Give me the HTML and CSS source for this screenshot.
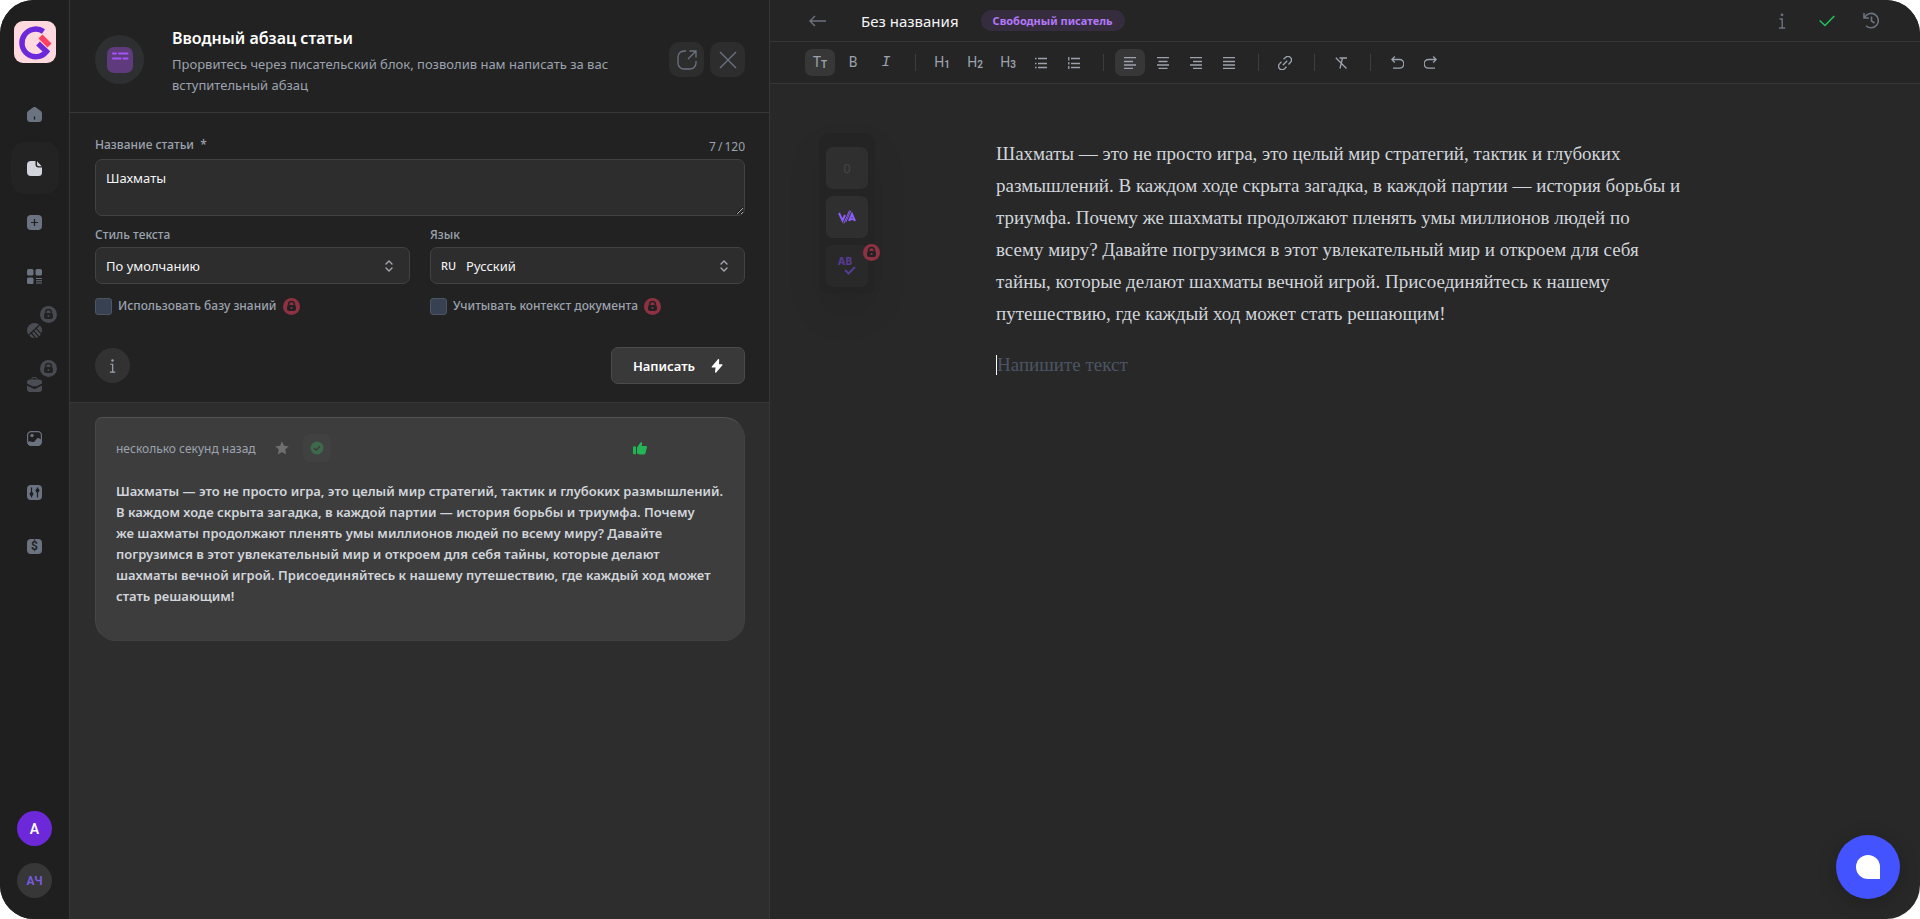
FILE: index.html
```html
<!DOCTYPE html>
<html lang="ru">
<head>
<meta charset="utf-8">
<meta name="viewport" content="width=device-width, initial-scale=1">
<title>Без названия</title>
<link rel="stylesheet" href="styles.css">
</head>
<body>
<svg class="defs" width="0" height="0" aria-hidden="true">
  <symbol id="lock" viewBox="0 0 17 17">
    <path d="M5.6 7.4V6.4a2.9 2.9 0 0 1 5.8 0v1" fill="none" stroke="#222" stroke-width="1.5"/>
    <rect x="4" y="7" width="9" height="6" rx="2" fill="#222"/>
    <circle class="lock-hole" cx="8.5" cy="9.9" r="1"/>
  </symbol>
  <symbol id="updown" viewBox="0 0 8 12">
    <path d="M1 4l3-3 3 3M1 8l3 3 3-3" fill="none" stroke="#a3a7b0" stroke-width="1.4" stroke-linecap="round" stroke-linejoin="round"/>
  </symbol>
  <symbol id="info" viewBox="0 0 8 16">
    <path d="M1.5 6H4.2V15M1 15H7.2" fill="none" stroke="currentColor" stroke-width="1.4"/>
    <circle cx="4" cy="1.8" r="1.4" fill="currentColor"/>
  </symbol>
</svg>

<div class="app">
  <aside class="rail">
    <a class="logo" href="#" aria-label="Главная">
      <svg viewBox="0 0 42 42" width="42" height="42">
        <rect width="42" height="42" rx="9" fill="#ffd9de"/>
        <path d="M29.500 10.500A13.800 13.800 0 1 0 32.500 30.500L24 22.500" fill="none" stroke="#6d28d9" stroke-width="5.400"/>
        <path d="M26.500 15.500l9 9" stroke="#fb3f5e" stroke-width="5.600"/>
      </svg>
    </a>
    <nav class="rail-nav">
      <a href="#" aria-label="Дом">
        <svg viewBox="0 0 15 15" width="15" height="15"><path fill="currentColor" d="M6 .5a2.400 2.400 0 0 1 3 0l4.800 3.600A3 3 0 0 1 15 6.500V11.500A3.500 3.500 0 0 1 11.500 15h-8A3.500 3.500 0 0 1 0 11.500V6.500A3 3 0 0 1 1.200 4.100z"/><path d="M7.500 9.500v3" stroke="#1f1f1f" stroke-width="1.300"/></svg>
      </a>
      <a class="active" href="#" aria-label="Документы">
        <svg viewBox="0 0 15 15" width="15" height="15"><path fill="currentColor" d="M4 0h4.500v3.500A3 3 0 0 0 11.500 6.500H15V11.500A3.500 3.500 0 0 1 11.500 15H4A4 4 0 0 1 0 11V4A4 4 0 0 1 4 0zM10 .3L14.700 5.200H11.800A1.800 1.800 0 0 1 10 3.400z"/></svg>
      </a>
      <a href="#" aria-label="Создать">
        <svg viewBox="0 0 15 15" width="15" height="15"><rect width="15" height="15" rx="4" fill="currentColor"/><path d="M7.500 4v7M4 7.500h7" stroke="#1f1f1f" stroke-width="1.200"/></svg>
      </a>
      <a href="#" aria-label="Шаблоны">
        <svg viewBox="0 0 15 15" width="15" height="15" fill="currentColor"><rect width="6.500" height="6.500" rx="1.500"/><rect x="8.500" width="6.500" height="6.500" rx="1.500"/><rect y="8.500" width="6.500" height="6.500" rx="1.500"/><path d="M9 9h6v1H9zM9 11.300h6v1H9zM9 13.600h6v1H9z"/></svg>
      </a>
      <a class="locked" href="#" aria-label="Игры">
        <svg viewBox="0 0 15 15" width="15" height="15"><circle cx="7.500" cy="7.500" r="7.500" fill="currentColor"/><path d="M1.500 12.500L12.500 2M3.500 9l5 6M6 6.800l6 7M8.500 4.600l6.500 7" stroke="#1f1f1f" stroke-width="1.200"/></svg>
        <span class="badge grey"><svg width="17" height="17"><use href="#lock"/></svg></span>
      </a>
      <a class="locked" href="#" aria-label="Работа">
        <svg viewBox="0 0 15 15" width="15" height="15"><path d="M5 3V1.500A1 1 0 0 1 6 .6h3a1 1 0 0 1 1 .9V3" fill="none" stroke="currentColor"/><path fill="currentColor" d="M3 2.500h9a3 3 0 0 1 3 4L9 9.500a3 3 0 0 0-3 0L0 6.500a3 3 0 0 1 3-4zM0 8.500l6 3a3 3 0 0 0 3 0l6-3V12a3 3 0 0 1-3 3H3a3 3 0 0 1-3-3z"/></svg>
        <span class="badge grey"><svg width="17" height="17"><use href="#lock"/></svg></span>
      </a>
      <a href="#" aria-label="Изображения">
        <svg viewBox="0 0 15 15" width="15" height="15"><rect x=".6" y=".6" width="13.800" height="13.800" rx="3.600" fill="none" stroke="currentColor" stroke-width="1.200"/><circle cx="5" cy="4.500" r="1.700" fill="currentColor"/><path fill="currentColor" d="M.6 11.500C3 8.500 4.500 11.500 6.500 11S9.500 7 11 7s2.400 1 3.400 2v2.500a3 3 0 0 1-3 3h-8a3 3 0 0 1-2.800-3z"/></svg>
      </a>
      <a href="#" aria-label="Настройки">
        <svg viewBox="0 0 15 15" width="15" height="15"><rect width="15" height="15" rx="4" fill="currentColor"/><path d="M4.500 2.500v10M10.500 2.500v10" stroke="#1f1f1f" stroke-width="1.200"/><circle cx="4.500" cy="9" r="1.900" fill="#1f1f1f"/><circle cx="10.500" cy="5.500" r="1.900" fill="#1f1f1f"/></svg>
      </a>
      <a href="#" aria-label="Тарифы"><span class="coin">$</span></a>
    </nav>
    <div class="avatars">
      <button class="avatar violet" type="button">A</button>
      <button class="avatar" type="button">АЧ</button>
    </div>
  </aside>

  <section class="panel">
    <header class="panel-head">
      <span class="tool-icon">
        <svg viewBox="0 0 26 26" width="26" height="26"><rect width="26" height="26" rx="7" fill="#5f3b7d"/><path d="M6 6.500h3M12 6.500h8.500M6 11.500h7.500M16.500 11.500h4" stroke="#a855f7" stroke-width="2" stroke-linecap="round"/></svg>
      </span>
      <div class="panel-title">
        <h1>Вводный абзац статьи</h1>
        <p>Прорвитесь через писательский блок, позволив нам написать за вас вступительный абзац</p>
      </div>
      <div class="head-actions">
        <button type="button" aria-label="Открыть">
          <svg viewBox="0 0 20 20" width="20" height="20"><path d="M9 1H7a6 6 0 0 0-6 6v6a6 6 0 0 0 6 6h6a6 6 0 0 0 6-6v-2M11 9l8-8M12.500 1H19v6.500" fill="none" stroke="currentColor" stroke-width="1.300"/></svg>
        </button>
        <button type="button" aria-label="Закрыть">
          <svg viewBox="0 0 20 20" width="20" height="20"><path d="M2 2l16 16M18 2L2 18" fill="none" stroke="currentColor" stroke-width="1.300"/></svg>
        </button>
      </div>
    </header>

    <form class="form">
      <div class="field">
        <div class="label-row">
          <label for="title">Название статьи &nbsp;*</label>
          <span class="counter">7&thinsp;/&thinsp;120</span>
        </div>
        <textarea id="title" rows="2">Шахматы</textarea>
      </div>
      <div class="columns">
        <div class="field">
          <label for="style">Стиль текста</label>
          <div class="select">
            <select id="style"><option>По умолчанию</option></select>
            <svg width="8" height="12"><use href="#updown"/></svg>
          </div>
          <div class="check">
            <input type="checkbox" id="kb"><label for="kb">Использовать базу знаний</label>
            <span class="badge red"><svg width="17" height="17"><use href="#lock"/></svg></span>
          </div>
        </div>
        <div class="field">
          <label for="lang">Язык</label>
          <div class="select">
            <span class="code">RU</span>
            <select id="lang"><option>Русский</option></select>
            <svg width="8" height="12"><use href="#updown"/></svg>
          </div>
          <div class="check">
            <input type="checkbox" id="ctx"><label for="ctx">Учитывать контекст документа</label>
            <span class="badge red"><svg width="17" height="17"><use href="#lock"/></svg></span>
          </div>
        </div>
      </div>
      <div class="form-foot">
        <button class="info" type="button" aria-label="Справка"><svg width="7" height="14"><use href="#info"/></svg></button>
        <button class="write" type="button">Написать
          <svg viewBox="0 0 12 14" width="12" height="14"><path fill="#fff" d="M7 .3L.8 7.600c-.4.500-.1 1 .5 1h3.200L4 13c0 .8.700 1 1.200.5L11.400 6.300c.4-.5.100-1-.5-1H8L8.200.8C8.200.1 7.500-.2 7 .3z"/></svg>
        </button>
      </div>
    </form>

    <div class="results">
      <article class="card">
        <div class="card-meta">
          <time>несколько секунд назад</time>
          <button class="star" type="button" aria-label="В избранное">
            <svg viewBox="0 0 14 14" width="14" height="14"><path fill="#6f6f6f" d="M7 .3l2 4.500 4.800.5-3.600 3.300 1 4.900L7 11l-4.200 2.500 1-4.900L.2 5.300 5 4.800z"/></svg>
          </button>
          <button class="done" type="button" aria-label="Готово">
            <svg viewBox="0 0 14 14" width="14" height="14"><circle cx="7" cy="7" r="6.500" fill="#3c6a4a"/><path d="M4 7l2.200 2.200L10 5.200" fill="none" stroke="#3d3d3d" stroke-width="1.500"/></svg>
          </button>
          <button class="like" type="button" aria-label="Нравится">
            <svg viewBox="0 0 14 13" width="14" height="13"><path fill="#22b455" d="M0 4.500h3V12.200H1a1 1 0 0 1-1-1zM4 5.500L7 1c.5-1 2.300-.8 2.200.5L8.800 4H13a1 1 0 0 1 1 1.200L12.500 11a2 2 0 0 1-2 1.500H6.500L4 11.500z"/></svg>
          </button>
        </div>
        <p>Шахматы — это не просто игра, это целый мир стратегий, тактик и глубоких размышлений.<br>
          В каждом ходе скрыта загадка, в каждой партии — история борьбы и триумфа. Почему<br>
          же шахматы продолжают пленять умы миллионов людей по всему миру? Давайте<br>
          погрузимся в этот увлекательный мир и откроем для себя тайны, которые делают<br>
          шахматы вечной игрой. Присоединяйтесь к нашему путешествию, где каждый ход может<br>
          стать решающим!</p>
      </article>
    </div>
  </section>

  <main class="editor">
    <header class="doc-bar">
      <button class="back" type="button" aria-label="Назад">
        <svg viewBox="0 0 17 12" width="17" height="12"><path d="M17 6H1M6 1L1 6l5 5" fill="none" stroke="currentColor" stroke-width="1.400"/></svg>
      </button>
      <h2>Без названия</h2>
      <span class="pill">Свободный писатель</span>
      <div class="doc-actions">
        <button type="button" aria-label="Сведения"><svg width="8" height="16"><use href="#info"/></svg></button>
        <button class="saved" type="button" aria-label="Сохранено">
          <svg viewBox="0 0 16 12" width="16" height="12"><path d="M.7 5.500L6 10.500 15.300 1" fill="none" stroke="currentColor" stroke-width="1.500"/></svg>
        </button>
        <button type="button" aria-label="История">
          <svg viewBox="0 0 17 17" width="17" height="17" fill="none" stroke="currentColor" stroke-width="1.600"><path d="M1 1v5h5M1.600 5.500A7.200 7.200 0 1 1 3 13.700"/><path d="M8.500 4.500V9l3 2"/></svg>
        </button>
      </div>
    </header>

    <div class="toolbar" role="toolbar">
      <div class="group">
        <button class="on" type="button">T<small>T</small></button>
        <button type="button">B</button>
        <button class="italic" type="button">I</button>
      </div>
      <div class="group">
        <button type="button">H<small>1</small></button>
        <button type="button">H<small>2</small></button>
        <button type="button">H<small>3</small></button>
        <button type="button" aria-label="Маркированный список"><svg viewBox="0 0 12 12" width="12" height="12"><path d="M3 1.500h9M3 6.500h9M3 10.500h9M0 1.500h1.500M0 6.500h1.500M0 10.500h1.500"/></svg></button>
        <button type="button" aria-label="Нумерованный список"><svg viewBox="0 0 12 12" width="12" height="12"><path d="M3 1.500h9M3 6.500h9M3 10.500h9M.8 0v3.500M.8 5v2.500M.8 9v3"/></svg></button>
      </div>
      <div class="group">
        <button class="on" type="button" aria-label="По левому краю"><svg viewBox="0 0 12 12" width="12" height="12"><path d="M0 .5h12M0 4.500h9M0 8h12M0 11.500h9"/></svg></button>
        <button type="button" aria-label="По центру"><svg viewBox="0 0 12 12" width="12" height="12"><path d="M0 .5h12M1.500 4.500h9M0 8h12M1.500 11.500h9"/></svg></button>
        <button type="button" aria-label="По правому краю"><svg viewBox="0 0 12 12" width="12" height="12"><path d="M0 .5h12M3 4.500h9M0 8h12M3 11.500h9"/></svg></button>
        <button type="button" aria-label="По ширине"><svg viewBox="0 0 12 12" width="12" height="12"><path d="M0 .5h12M0 4.500h12M0 8h12M0 11.500h12"/></svg></button>
      </div>
      <div class="group">
        <button type="button" aria-label="Ссылка"><svg viewBox="0 0 14 14" width="14" height="14"><path d="M5.500 3.200L7.500 1.500a3.200 3.200 0 0 1 5 4.800L10.500 8.500M8.500 10.800l-2 1.900a3.200 3.200 0 0 1-5-4.800l2-2.100M4.800 9.200l4.400-4.400"/></svg></button>
      </div>
      <div class="group">
        <button type="button" aria-label="Очистить формат"><svg viewBox="0 0 12 12" width="12" height="12"><path d="M4.500 1H12M7.500 1L5 11.500M.8.800l10.700 10.700"/></svg></button>
      </div>
      <div class="group">
        <button type="button" aria-label="Отменить"><svg viewBox="0 0 13 13" width="13" height="13"><path d="M1 3.500h7.500a4.200 4.200 0 0 1 0 8.700H2M3.800.5L.8 3.500l3 3"/></svg></button>
        <button type="button" aria-label="Повторить"><svg viewBox="0 0 13 13" width="13" height="13"><path d="M12 3.500H4.500a4.200 4.200 0 0 0 0 8.700H11M9.200.5l3 3-3 3"/></svg></button>
      </div>
    </div>

    <div class="canvas">
      <div class="side-tools">
        <span class="tile count">0</span>
        <button class="tile" type="button" aria-label="Проверка уникальности">
          <svg viewBox="0 0 18 14" width="18" height="14" fill="none" stroke="#8b5cf6"><path d="M1 3l3.500 7.500L7 5M11 11l3-7 3 7M12.500 9.300h4" stroke-width="2"/><path d="M5.800 13.500L11.500 .5M7.800 12L12.800 .8" stroke-width="1"/></svg>
        </button>
        <button class="tile dim" type="button" aria-label="Проверка орфографии">
          <span class="ab">AB</span>
          <svg viewBox="0 0 12 9" width="12" height="9"><path d="M1 4l3.500 3.500L11 1" fill="none" stroke="currentColor" stroke-width="2"/></svg>
          <span class="badge red"><svg width="17" height="17"><use href="#lock"/></svg></span>
        </button>
      </div>
      <div class="document">
        <p>Шахматы — это не просто игра, это целый мир стратегий, тактик и глубоких<br>
          размышлений. В каждом ходе скрыта загадка, в каждой партии — история борьбы и<br>
          триумфа. Почему же шахматы продолжают пленять умы миллионов людей по<br>
          всему миру? Давайте погрузимся в этот увлекательный мир и откроем для себя<br>
          тайны, которые делают шахматы вечной игрой. Присоединяйтесь к нашему<br>
          путешествию, где каждый ход может стать решающим!</p>
        <p class="empty"><span class="caret"></span>Напишите текст</p>
      </div>
    </div>

    <button class="chat" type="button" aria-label="Чат"><span></span></button>
  </main>
</div>
</body>
</html>
```
FILE: styles.css
```css
* { box-sizing: border-box; }

body {
  margin: 0;
  background: #fff;
  color: #f3f4f6;
  font-family: "Noto Sans", "Open Sans", sans-serif;
  font-size: 13px;
}

h1, h2, p { margin: 0; }

button {
  margin: 0;
  padding: 0;
  border: 0;
  background: none;
  color: inherit;
  font: inherit;
  cursor: pointer;
}

svg { display: block; }
.defs { position: absolute; }

.app {
  display: grid;
  grid-template-columns: 70px minmax(0, 700px) minmax(0, 1fr);
  min-height: 100vh;
  border-radius: 34px;
  background: #282828;
  overflow: hidden;
}

/* Left rail */
.rail {
  display: flex;
  flex-direction: column;
  align-items: center;
  padding: 21px 0;
  border-right: 1px solid #373737;
  background: #1f1f1f;
}

.rail-nav {
  display: flex;
  flex-direction: column;
  gap: 2px;
  margin-top: 25px;
}

.rail-nav a {
  position: relative;
  display: grid;
  place-items: center;
  width: 48px;
  height: 52px;
  border-radius: 14px;
  color: #6b7280;
  text-decoration: none;
}

.rail-nav .active { background: #232323; color: #d1d5db; }
.rail-nav .locked { color: #4b4d55; }

.badge {
  display: block;
  flex: none;
  width: 17px;
  height: 17px;
  border-radius: 50%;
}
.badge.grey { background: #484a51; fill: #484a51; }
.badge.red { background: #8f3142; fill: #8f3142; }
.rail-nav .badge { position: absolute; top: 2px; right: 2px; }

.coin {
  width: 15px;
  height: 15px;
  border-radius: 4px;
  background: #6b7280;
  color: #1f1f1f;
  font: 600 12px/15px Roboto, sans-serif;
  text-align: center;
}

.avatars {
  display: flex;
  flex-direction: column;
  gap: 17px;
  margin-top: auto;
}

.avatar {
  width: 35px;
  height: 35px;
  border-radius: 50%;
  background: #373737;
  color: #7c5ce6;
  font-family: Roboto, sans-serif;
  font-size: 12px;
  font-weight: 600;
}
.avatar.violet { background: #6d28d9; color: #fff; font-size: 14px; }

/* Generator panel */
.panel {
  display: flex;
  flex-direction: column;
  border-right: 1px solid #373737;
  background: #222;
}

.panel-head {
  display: flex;
  align-items: center;
  padding: 23px 24px 16px 25px;
  border-bottom: 1px solid #373737;
}

.tool-icon {
  display: grid;
  place-items: center;
  flex: none;
  width: 49px;
  height: 49px;
  border-radius: 50%;
  background: #2e2f31;
}

.panel-title {
  flex: 1;
  padding: 3px 24px 0 28px;
  color: #9ca3af;
  line-height: 21px;
}
.panel-title h1 {
  margin-bottom: 4px;
  color: #fff;
  font-size: 16px;
  font-weight: 600;
  line-height: 24px;
}

.head-actions { display: flex; gap: 6px; }
.head-actions button {
  display: grid;
  place-items: center;
  width: 35px;
  height: 35px;
  border-radius: 10px;
  background: #2d2d2d;
  color: #6b7280;
}

.form {
  padding: 22px 24px 18px 25px;
  border-bottom: 1px solid #373737;
  color: #9ca3af;
}

.field label,
.check label {
  font-size: 12px;
  font-weight: 500;
  line-height: 20px;
}

.label-row {
  display: flex;
  justify-content: space-between;
  height: 24px;
}
.counter { font-size: 12px; line-height: 24px; }

textarea,
.select {
  border: 1px solid #424242;
  border-radius: 7px;
  background: #2d2d2d;
}

textarea {
  display: block;
  width: 100%;
  height: 57px;
  padding: 8px 10px;
  color: #f3f4f6;
  font: 13px/20px "Noto Sans", sans-serif;
  resize: vertical;
  outline: 0;
}

.columns {
  display: grid;
  grid-template-columns: 1fr 1fr;
  gap: 20px;
  margin-top: 9px;
}
.columns .field > label { display: block; height: 22px; }

.select {
  position: relative;
  display: flex;
  align-items: center;
  gap: 10px;
  height: 37px;
  padding: 0 16px 0 10px;
}
.select select {
  flex: 1;
  min-width: 0;
  padding: 0;
  border: 0;
  appearance: none;
  background: transparent;
  color: #f3f4f6;
  font: 13px/20px "Noto Sans", sans-serif;
  outline: 0;
}
.code { color: #f3f4f6; font-size: 11px; font-weight: 500; }

.check {
  display: flex;
  align-items: center;
  gap: 6px;
  margin-top: 12px;
}
.check input {
  width: 17px;
  height: 17px;
  margin: 0;
  appearance: none;
  border: 1px solid #4b5563;
  border-radius: 3px;
  background: #374151;
}

.form-foot {
  display: flex;
  align-items: center;
  justify-content: space-between;
  margin-top: 31px;
}

.info {
  display: grid;
  place-items: center;
  width: 35px;
  height: 35px;
  border-radius: 50%;
  background: #323232;
}

.write {
  display: flex;
  align-items: center;
  gap: 16px;
  height: 37px;
  padding: 0 21px;
  border: 1px solid #4b4b4b;
  border-radius: 7px;
  background: #393939;
  color: #fff;
  font-weight: 600;
}

.results {
  flex: 1;
  padding: 14px 24px 14px 25px;
  background: #2d2d2d;
}

.card {
  padding: 16px 20px 33px;
  border: 1px solid #414141;
  border-top-color: #525252;
  border-left-color: #484848;
  border-radius: 7px 21px 21px 21px;
  background: #3d3d3d;
}

.card-meta {
  display: flex;
  align-items: center;
  height: 28px;
  color: #9ca3af;
  font-size: 12px;
}
.star { margin-left: 19px; }
.done {
  display: grid;
  place-items: center;
  width: 28px;
  height: 28px;
  margin-left: 14px;
  border-radius: 7px;
  background: #414141;
}
.like { margin-left: auto; margin-right: 77px; }

.card p {
  margin-top: 19px;
  color: #d1d5db;
  font-weight: 600;
  line-height: 21px;
}

/* Editor */
.editor { display: flex; flex-direction: column; position: relative; }

.doc-bar,
.toolbar {
  display: flex;
  align-items: center;
  height: 42px;
  padding: 0 40px 0 35px;
  border-bottom: 1px solid #373737;
  background: #252525;
}

.doc-bar { color: #6b7280; }
.back { margin-left: 4px; }
.doc-bar h2 {
  margin: 0 22px 0 35px;
  color: #f3f4f6;
  font-size: 15px;
  font-weight: 400;
}
.pill {
  padding: 0 12px;
  border-radius: 11px;
  background: #352d3d;
  color: #b377f8;
  font-size: 11px;
  font-weight: 700;
  line-height: 21px;
}
.doc-actions { display: flex; margin-left: auto; margin-right: -14px; }
.doc-actions button {
  display: grid;
  place-items: center;
  width: 45px;
  height: 40px;
}
.doc-actions .saved { color: #22c55e; }

.group { display: flex; gap: 3px; }
.group + .group::before {
  content: "";
  align-self: center;
  width: 1px;
  height: 17px;
  margin: 0 8px 0 14px;
  background: #3d3d3d;
}
.group button {
  display: flex;
  align-items: center;
  justify-content: center;
  width: 30px;
  height: 27px;
  border-radius: 7px;
  color: #9ca3af;
  font: 14px/27px Roboto, sans-serif;
}
.group button.on { background: #373737; }
.group small { font-size: 10px; font-weight: 600; line-height: 27px; padding-top: 3px; }
.group .italic { font-family: "Liberation Mono", monospace; font-style: italic; font-size: 15px; }
.group svg { fill: none; stroke: currentColor; stroke-width: 1.3; }

.canvas {
  display: grid;
  grid-template-columns: minmax(110px, 1fr) minmax(0, 700px) minmax(0, 1fr);
  align-items: start;
}

.side-tools {
  display: grid;
  gap: 7px;
  justify-self: start;
  margin: 49px 0 0 49px;
  padding: 14px 7px 7px;
  border-radius: 10px;
  background: #242424;
  box-shadow: 0 18px 36px rgba(0, 0, 0, 0.08);
}
.tile {
  position: relative;
  display: grid;
  place-items: center;
  width: 42px;
  height: 42px;
  border-radius: 7px;
  background: #2f2f2f;
}
.count { color: #454545; }
.tile.dim {
  align-content: center;
  background: #292929;
  color: #563b92;
}
.ab {
  padding-right: 4px;
  font: 800 10px/9px Inter, sans-serif;
}
.tile.dim > svg { margin-left: 6px; }
.tile .badge { position: absolute; top: -1px; right: -12px; }

.document {
  padding: 54px 0 40px 1px;
  color: #d1d5db;
  font-family: "Liberation Serif", serif;
  font-size: 19px;
  line-height: 32px;
}
.empty {
  display: flex;
  align-items: center;
  margin-top: 19px;
  color: #4b5563;
}
.caret { width: 1px; height: 20px; background: #fff; }

.chat {
  position: fixed;
  right: 20px;
  bottom: 20px;
  display: grid;
  place-items: center;
  width: 64px;
  height: 64px;
  border-radius: 50%;
  background: #4353ff;
  box-shadow: 0 4px 20px rgba(0, 0, 0, 0.2);
}
.chat span {
  width: 24px;
  height: 24px;
  border-radius: 12px 12px 0 12px;
  background: #fff;
}
```
